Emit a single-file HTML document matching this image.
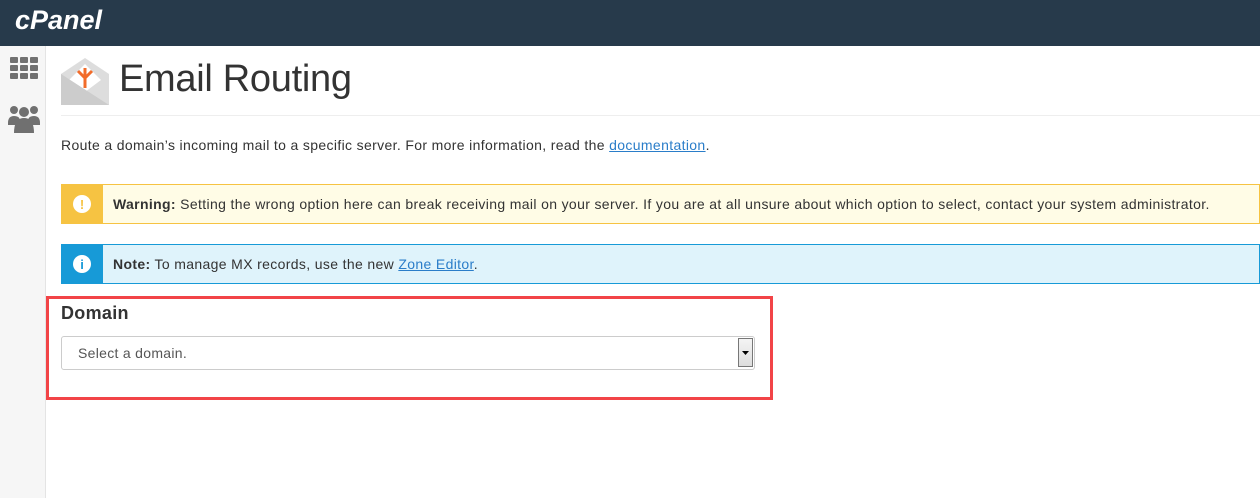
<!DOCTYPE html>
<html><head><style>
body{margin:0;width:1260px;height:498px;overflow:hidden;font-family:"Liberation Sans",sans-serif;background:#fff;color:#333;position:relative}
.hdr{position:absolute;left:0;top:0;width:1260px;height:46px;background:#273a4b}
.logo{position:absolute;left:15px;top:5px;color:#fff;font-size:27px;font-weight:bold;font-style:italic;letter-spacing:0px}
.side{position:absolute;left:0;top:46px;width:45px;height:452px;background:#f6f6f6;border-right:1px solid #e4e4e4}
.t{position:absolute;left:119px;top:58px;font-size:38px;color:#333;letter-spacing:-0.3px}
.hr{position:absolute;left:61px;top:115px;width:1199px;border-top:1px solid #eee}
.p{position:absolute;left:61px;top:137px;font-size:14px;letter-spacing:0.35px}
a{color:#2a7dc9;text-decoration:underline}
.al{position:absolute;left:61px;width:1199px;height:40px;font-size:14px;box-sizing:border-box;letter-spacing:0.35px}
.al .ic{position:absolute;left:-1px;top:-1px;width:42px;height:40px;display:flex;align-items:center;justify-content:center}
.al .ic span{width:18px;height:18px;border-radius:50%;background:#fff;font-size:13px;font-weight:bold;display:flex;align-items:center;justify-content:center;letter-spacing:0}
.al .tx{position:absolute;left:51px;top:11px}
.box{position:absolute;left:46px;top:296px;width:721px;height:98px;border:3px solid #f24447}
.dl{position:absolute;left:61px;top:303px;font-size:18px;font-weight:bold;letter-spacing:0.3px}
.sel{position:absolute;left:61px;top:336px;width:692px;height:32px;border:1px solid #ccc;border-radius:3px;font-size:14px;color:#555;letter-spacing:0.3px}
.sel span{position:absolute;left:16px;top:8px}
.btn{position:absolute;right:1px;top:1px;width:15px;height:29px;border:1px solid #777;background:linear-gradient(#f4f4f4,#ddd);box-sizing:border-box}
</style></head><body>
<div class="hdr"><div class="logo">cPanel</div></div>
<div class="side">
<svg style="position:absolute;left:10px;top:11px" width="29" height="24"><g fill="#707070"><rect x="0" y="0" width="8" height="6" rx="1"/><rect x="10" y="0" width="8" height="6" rx="1"/><rect x="20" y="0" width="8" height="6" rx="1"/><rect x="0" y="8" width="8" height="6" rx="1"/><rect x="10" y="8" width="8" height="6" rx="1"/><rect x="20" y="8" width="8" height="6" rx="1"/><rect x="0" y="16" width="8" height="6" rx="1"/><rect x="10" y="16" width="8" height="6" rx="1"/><rect x="20" y="16" width="8" height="6" rx="1"/></g></svg>
<svg style="position:absolute;left:8px;top:57px" width="32" height="30"><g fill="#707070"><circle cx="6" cy="7" r="4"/><circle cx="26" cy="7" r="4"/><circle cx="16" cy="9" r="5"/><path d="M0 20q0-7 6-7t6 5v4H0z"/><path d="M32 20q0-7-6-7t-6 5v4h12z"/><path d="M6 30q0-15 10-15t10 15z"/></g></svg>
</div>
<svg style="position:absolute;left:61px;top:58px" width="48" height="47"><path d="M0 16L24 0L48 16V47H0z" fill="#ddd"/><path d="M8 22L24 6L40 22L24 34z" fill="#fff"/><path d="M0 16V47H48z" fill="#ccc"/><g stroke="#f26c2a" stroke-width="3" fill="none"><path d="M24 30V10M24 20L17 13M24 20L31 13"/></g></svg>
<div class="t">Email Routing</div>
<div class="hr"></div>
<div class="p">Route a domain’s incoming mail to a specific server. For more information, read the <a>documentation</a>.</div>
<div class="al" style="top:184px;background:#fffce6;border:1px solid #f6c342"><div class="ic" style="background:#f6c342"><span style="color:#f6c342">!</span></div><div class="tx"><b>Warning:</b> Setting the wrong option here can break receiving mail on your server. If you are at all unsure about which option to select, contact your system administrator.</div></div>
<div class="al" style="top:244px;background:#dff3fb;border:1px solid #179ad7"><div class="ic" style="background:#179ad7"><span style="color:#179ad7">i</span></div><div class="tx"><b>Note:</b> To manage MX records, use the new <a>Zone Editor</a>.</div></div>
<div class="box"></div>
<div class="dl">Domain</div>
<div class="sel"><span>Select a domain.</span><div class="btn"><svg width="13" height="27"><path d="M3 12h7l-3.5 4z" fill="#000"/></svg></div></div>
</body></html>
